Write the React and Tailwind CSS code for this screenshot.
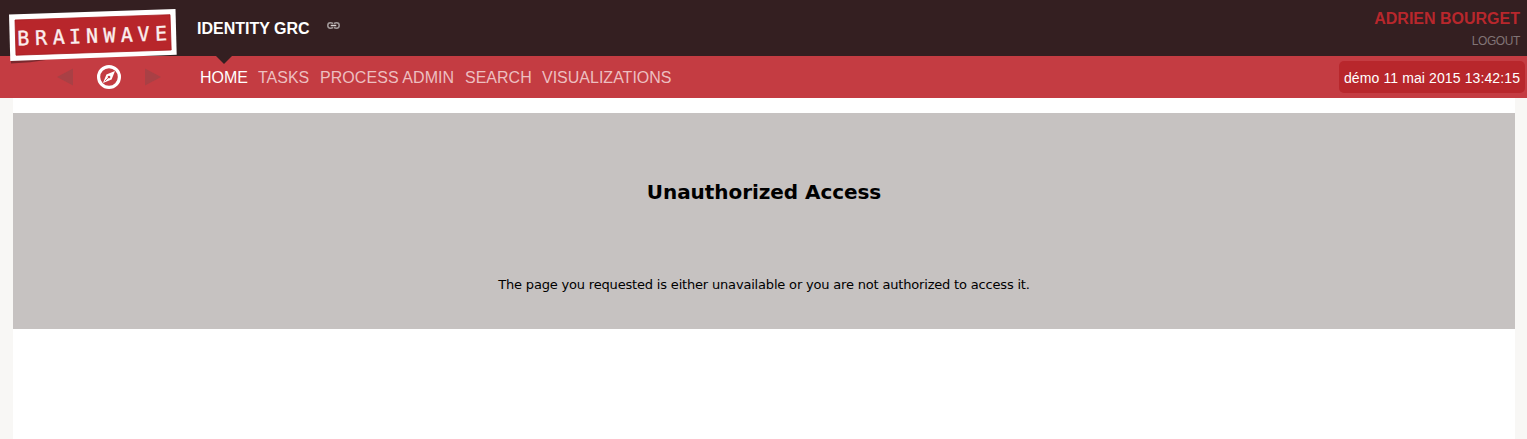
const NAV = [
  { label: 'HOME', width: 'w-[48px]', active: true },
  { label: 'TASKS', width: 'w-[52px]' },
  { label: 'PROCESS ADMIN', width: 'w-[135px]', tracking: 'tracking-[0.06px]' },
  { label: 'SEARCH', width: 'w-[67px]' },
  { label: 'VISUALIZATIONS', width: 'w-[130px]' },
];

function Logo() {
  return (
    <svg className="absolute left-0 top-0 z-10" width="190" height="70" viewBox="0 0 190 70" aria-label="Brainwave">
      <path d="M11 60 L46 60 L30 62.2 L11 63.5Z" fill="#5c2025" opacity=".7" />
      <path d="M9 14.5 L175.5 9 L176.7 54.8 L10.3 61Z" fill="#fff" />
      <path d="M15 20 L170 14.7 L171.2 50 L16 55.2Z" fill="#b8262b" stroke="#a4191e" strokeWidth=".8" />
      <g transform="rotate(-2 15 46)" fill="#fbeeee" stroke="#fbeeee" strokeWidth=".35" fontFamily="DejaVu Sans Mono, monospace" fontSize="20" textAnchor="middle">
        <text y="45.6" x="23.6 41.2 59 75.3 92.3 109.8 127.2 143.8 161.5">BRAINWAVE</text>
      </g>
    </svg>
  );
}

function Compass() {
  return (
    <svg width="24" height="24" viewBox="0 0 24 24">
      <circle cx="12" cy="12" r="10.4" fill="none" stroke="#fff" strokeWidth="3.2" />
      <path fillRule="evenodd" d="M18 6 L14.6 14.4 L6 18 L9.4 9.6Z M12 10.7a1.3 1.3 0 1 0 .01 0Z" fill="#fff" />
      <path d="M7.8 16.2 L11 13" stroke="#c43c42" strokeWidth=".8" />
    </svg>
  );
}

function LinkIcon() {
  return (
    <svg className="ml-[17px] mt-[22px]" width="13" height="7" viewBox="0 0 13 7" fill="none" stroke="#a39b9b" strokeWidth="1.5">
      <path d="M6 1.6C5.2.9 4.5.8 3.4.8 1.7.8.8 2 .8 3.5S1.7 6.2 3.4 6.2c1.1 0 1.8-.1 2.6-.8M7 1.6C7.8.9 8.5.8 9.6.8c1.7 0 2.6 1.2 2.6 2.7s-.9 2.7-2.6 2.7c-1.1 0-1.8-.1-2.6-.8" />
      <path d="M3.7 3.5h5.6" stroke="#d8d2d2" />
    </svg>
  );
}

export default function App() {
  return (
    <div className="relative flex h-[439px] w-full flex-col overflow-hidden bg-[#f8f7f5] font-['Liberation_Sans',Arial,sans-serif]">
      <Logo />
      <header className="flex h-14 shrink-0 justify-between bg-[#341f21] pl-[197px] pr-[7px]">
        <div className="flex">
          <h1 className="mt-[19px] w-[113px] whitespace-nowrap text-[16px] leading-5 font-bold text-white">IDENTITY GRC</h1>
          <LinkIcon />
        </div>
        <div className="flex flex-col items-end whitespace-nowrap">
          <span className="mt-[9px] text-[16px] leading-5 font-bold text-[#b8272c]">ADRIEN BOURGET</span>
          <span className="mt-1 text-[12px] leading-4 tracking-[-0.4px] text-[#817476]">LOGOUT</span>
        </div>
      </header>
      <nav className="relative flex h-[42px] shrink-0 items-start bg-[#c43c42]">
        <svg className="absolute left-[216px] top-0" width="16" height="8" viewBox="0 0 16 8"><path d="M0 0h16L8 8Z" fill="#341f21" /></svg>
        <div className="ml-[57px] mt-[9px] flex w-[143px] items-center gap-6">
          <svg width="16" height="18" viewBox="0 0 16 18"><path d="M16 .5v17L0 9Z" fill="#a94045" /></svg>
          <Compass />
          <svg width="16" height="18" viewBox="0 0 16 18"><path d="M0 .5v17L16 9Z" fill="#a94045" /></svg>
        </div>
        <div className="mt-3 flex gap-[10px] text-[16px] leading-5">
          {NAV.map((n) => (
            <a key={n.label} className={`${n.width} ${n.tracking ?? ''} whitespace-nowrap ${n.active ? 'text-white' : 'text-[#edbfc0]'}`}>{n.label}</a>
          ))}
        </div>
        <div className="ml-auto mr-[2px] mt-[5px] flex h-8 w-[186px] items-center justify-center whitespace-nowrap rounded-[5px] bg-[#b8272c] pt-[2px] text-[14px] tracking-[0.11px] text-white">
          démo 11 mai 2015 13:42:15
        </div>
      </nav>
      <main className="ml-[13px] mr-3 flex-1 bg-white pt-[15px]">
        <section className="flex h-[216px] flex-col items-center bg-[#c6c2c1] font-['DejaVu_Sans',Verdana,sans-serif] text-black">
          <h2 className="mt-[67px] whitespace-nowrap text-[20px] leading-6 font-bold tracking-[-0.06px]">Unauthorized Access</h2>
          <p className="mt-[71px] whitespace-nowrap text-[13px] leading-5 tracking-[-0.18px]">The page you requested is either unavailable or you are not authorized to access it.</p>
        </section>
      </main>
    </div>
  );
}
